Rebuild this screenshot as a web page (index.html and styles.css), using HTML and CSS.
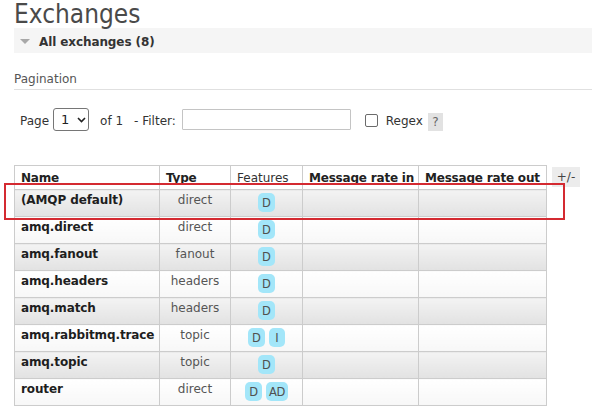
FILE: index.html
```html
<!DOCTYPE html>
<html>
<head>
<meta charset="utf-8">
<link rel="stylesheet" href="styles.css">
</head>
<body>
<div class="page">
  <h1 class="title">Exchanges</h1>
  <div class="section-bar"><span class="tri"></span><span class="section-label">All exchanges (8)</span></div>
  <div class="pag-head">Pagination</div>
  <div class="filter-row">
    <span class="lbl">Page</span>
    <span class="select"><span class="sel-val">1</span><svg class="chev" width="9" height="6" viewBox="0 0 9 6"><path d="M1 1 L4.5 4.5 L8 1" fill="none" stroke="#222" stroke-width="1.6"/></svg></span>
    <span class="lbl of">of 1</span>
    <span class="lbl filt">- Filter:</span>
    <span class="input"></span>
    <span class="check"></span>
    <span class="lbl regex">Regex</span>
    <span class="help">?</span>
  </div>
  <div class="table-row">
    <table class="list">
      <colgroup>
        <col class="c-name"><col class="c-type"><col class="c-feat"><col class="c-in"><col class="c-out">
      </colgroup>
      <thead>
        <tr>
          <th>Name</th><th>Type</th><th class="normal">Features</th><th>Message rate in</th><th>Message rate out</th>
        </tr>
      </thead>
      <tbody>
        <tr class="alt1"><td class="name">(AMQP default)</td><td class="type">direct</td><td class="feat"><span class="badge">D</span></td><td></td><td></td></tr>
        <tr class="alt2"><td class="name">amq.direct</td><td class="type">direct</td><td class="feat"><span class="badge">D</span></td><td></td><td></td></tr>
        <tr class="alt1"><td class="name">amq.fanout</td><td class="type">fanout</td><td class="feat"><span class="badge">D</span></td><td></td><td></td></tr>
        <tr class="alt2"><td class="name">amq.headers</td><td class="type">headers</td><td class="feat"><span class="badge">D</span></td><td></td><td></td></tr>
        <tr class="alt1"><td class="name">amq.match</td><td class="type">headers</td><td class="feat"><span class="badge">D</span></td><td></td><td></td></tr>
        <tr class="alt2"><td class="name">amq.rabbitmq.trace</td><td class="type">topic</td><td class="feat"><span class="badge">D</span><span class="badge">I</span></td><td></td><td></td></tr>
        <tr class="alt1"><td class="name">amq.topic</td><td class="type">topic</td><td class="feat"><span class="badge">D</span></td><td></td><td></td></tr>
        <tr class="alt2"><td class="name">router</td><td class="type">direct</td><td class="feat"><span class="badge">D</span><span class="badge wide">AD</span></td><td></td><td></td></tr>
      </tbody>
    </table>
    <span class="plusminus">+/-</span>
  </div>
  <div class="highlight"></div>
</div>
</body>
</html>
```
FILE: styles.css
```css
html, body {
  margin: 0;
  padding: 0;
  background: #fff;
}
body {
  font-family: "DejaVu Sans", Verdana, sans-serif;
  font-size: 12px;
  color: #333;
}
.page {
  position: relative;
  padding-left: 14px;
  width: 578px;
  height: 417px;
  overflow: hidden;
}
.title {
  margin: 0;
  padding-top: 1px;
  height: 27px;
  line-height: 27px;
  font-family: "DejaVu Sans Condensed", "DejaVu Sans", sans-serif;
  font-size: 26px;
  font-weight: normal;
  color: #4a4a4a;
}
.section-bar {
  height: 25px;
  box-sizing: border-box;
  padding: 2px 0 0 6px;
  background: #f5f5f5;
  display: flex;
  align-items: center;
}
.tri {
  width: 0;
  height: 0;
  border-left: 5px solid transparent;
  border-right: 5px solid transparent;
  border-top: 5px solid #a8a8a8;
  margin-right: 9px;
}
.section-label {
  font-weight: bold;
  color: #333;
  letter-spacing: -0.1px;
}
.pag-head {
  margin-top: 18px;
  line-height: 16px;
  padding-bottom: 2px;
  border-bottom: 1px solid #e0e0e0;
  color: #555;
}
.filter-row {
  margin-top: 18px;
  padding-left: 6px;
  height: 23px;
  display: flex;
  align-items: center;
}
.lbl {
  color: #333;
  padding-top: 2px;
}
.select {
  margin-left: 4px;
  width: 36px;
  height: 23px;
  box-sizing: border-box;
  border: 1px solid #767676;
  border-radius: 3px;
  display: flex;
  align-items: center;
  padding-left: 7px;
  font-size: 13px;
  color: #222;
}
.chev {
  margin-left: 8px;
}
.of {
  margin-left: 11px;
}
.filt {
  margin-left: 11px;
}
.input {
  margin-left: 6px;
  width: 169px;
  height: 21px;
  box-sizing: border-box;
  border: 1px solid #c4c4c4;
  border-radius: 1px;
}
.check {
  margin-left: 14px;
  width: 13px;
  height: 13px;
  box-sizing: border-box;
  border: 1px solid #6b6b6b;
  border-radius: 2px;
  margin-top: 1px;
}
.regex {
  margin-left: 8px;
}
.help {
  margin-left: 5px;
  width: 15px;
  height: 18px;
  margin-top: 4px;
  background: #e2e2e2;
  color: #666;
  text-align: center;
  line-height: 19px;
}
.table-row {
  margin-top: 34px;
  display: flex;
  align-items: flex-start;
}
.list {
  border-collapse: collapse;
  table-layout: fixed;
  width: 532px;
}
.c-name { width: 145px; }
.c-type { width: 71px; }
.c-feat { width: 72px; }
.c-in { width: 116px; }
.c-out { width: 128px; }
.list th, .list td {
  border: 1px solid #cccccc;
}
.list th {
  text-align: left;
  font-weight: bold;
  color: #222;
  padding: 5px 5px 4px 6px;
  line-height: 14px;
  white-space: nowrap;
  overflow: hidden;
  letter-spacing: -0.2px;
}
.list th.normal {
  font-weight: normal;
  color: #333;
  letter-spacing: 0;
}
.list td {
  padding: 3px 6px 4px;
  line-height: 14px;
  vertical-align: top;
  height: 19px;
}
.list tr.alt1 td {
  background: linear-gradient(#f3f3f3, #e2e2e2);
}
.list tr.alt2 td {
  background: linear-gradient(#ffffff, #f7f7f7);
}
.list td.name {
  font-weight: bold;
  color: #1e1e1e;
  white-space: nowrap;
  letter-spacing: -0.12px;
}
.list td.type {
  text-align: center;
  color: #555;
}
.list td.feat {
  text-align: center;
  font-size: 0;
  padding-left: 2px;
  padding-right: 2px;
}
.badge {
  display: inline-block;
  height: 19px;
  line-height: 20px;
  min-width: 8px;
  padding: 0 4px;
  margin: 0 2px;
  border-radius: 5px;
  background: #a3e6f9;
  color: #505050;
  font-size: 11.5px;
  vertical-align: top;
}
.badge.wide {
  letter-spacing: -0.5px;
  padding: 0 3px 0 3px;
}
.plusminus {
  margin-left: 5px;
  margin-top: 2px;
  width: 28px;
  height: 20px;
  line-height: 20px;
  text-align: center;
  background: #ececec;
  color: #444;
}
.highlight {
  position: absolute;
  left: 4px;
  top: 183px;
  width: 561px;
  height: 37px;
  box-sizing: border-box;
  border: 2px solid #d42a31;
}
```
